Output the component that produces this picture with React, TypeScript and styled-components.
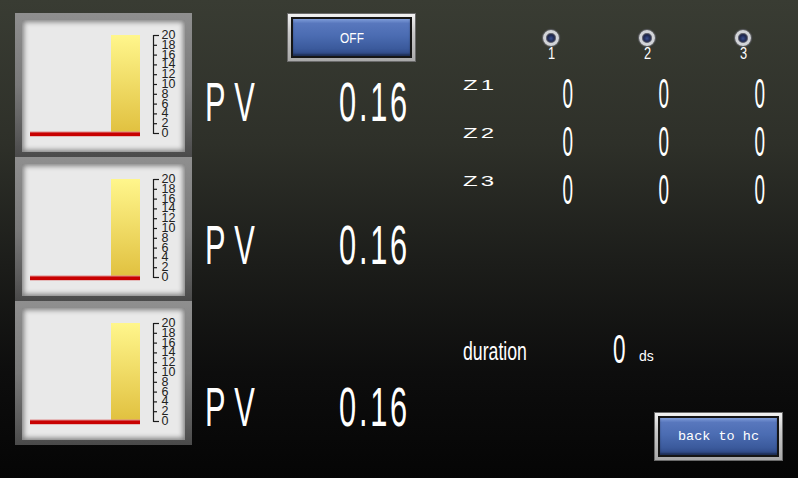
import React from 'react';
import styled, { createGlobalStyle } from 'styled-components';

const GlobalStyle = createGlobalStyle`
html, body { margin: 0; padding: 0; background: #000; }
#root { width: 798px; height: 478px; }
`

//region:Styled Components
const Screen = styled.div`
width: 798px;
height: 478px;
overflow: hidden;
display: flex;
background: linear-gradient(180deg, #393c33 0%, #2e3029 30%, #1c1d1a 55%, #0d0d0d 78%, #050505 100%);
font-family: "Liberation Sans", Arial, sans-serif;
color: #fff;`
const LeftPane = styled.div`
flex: 0 0 440px;
width: 440px;
min-width: 0;
padding: 13px 0 0 15px;
box-sizing: border-box;
display: flex;
flex-direction: column;`
const GaugeRow = styled.div`
display: flex;
height: 144px;
min-width: 0;`
const Frame = styled.div`
flex: 0 0 177px;
height: 144px;
box-sizing: border-box;
padding: 7px 7px 5px 7px;
display: flex;
background: linear-gradient(180deg, #8f8f8f 0%, #7a7a7a 50%, #5a5a5a 85%, #4a4a4a 100%);`
const Dial = styled.div`
flex: 1;
display: flex;
background: #e9e9e9;
box-shadow: inset 0 0 5px 2px rgba(0, 0, 0, 0.45);`
const Readout = styled.div`
flex: 1;
min-width: 0;
padding: 0 30px 0 13px;
display: flex;
flex-direction: column;`
const PvLine = styled.div<{ $top: number }>`
margin-top: ${p => p.$top}px;
display: flex;
justify-content: space-between;
align-items: flex-start;`
const Slot = styled.div<{ $w: number; $end?: boolean; $drop?: number }>`
flex: 0 0 ${p => p.$w}px;
width: ${p => p.$w}px;
display: flex;
justify-content: ${p => p.$end ? 'flex-end' : 'flex-start'};
margin-bottom: ${p => -(p.$drop ?? 0)}px;`
const Lcd = styled.span<{ $size: number; $sx: number; $origin?: string; $ls?: number }>`
display: inline-block;
flex-shrink: 0;
font-family: "Liberation Sans", Arial, sans-serif;
font-size: ${p => p.$size}px;
line-height: ${p => Math.round(p.$size * 0.716)}px;
letter-spacing: ${p => p.$ls ?? 0}px;
transform: scaleX(${p => p.$sx});
transform-origin: ${p => p.$origin ?? 'left'} center;
color: #fff;
white-space: nowrap;`
const ButtonShell = styled.div<{ $left?: number }>`
width: 129px;
height: 49px;
margin-left: ${p => p.$left ?? 0}px;
box-sizing: border-box;
padding: 3px;
border: 1px solid #6a6a6a;
background: linear-gradient(180deg, #f2f2f2 0%, #c8c8c8 40%, #a9a9a9 100%);
display: flex;
flex-shrink: 0;`
const ButtonFace = styled.div<{ $mono?: boolean }>`
flex: 1;
border: 2px solid #151515;
background: linear-gradient(180deg, #7d9bd8 0%, #5877bd 12%, #4b6cb2 45%, #3b5a9c 80%, #2c4580 100%);
box-shadow: inset 0 -2px 2px rgba(0, 0, 0, 0.35);
display: flex;
align-items: center;
justify-content: center;
color: #fff;
font-family: ${p => p.$mono ? '"Liberation Mono", "DejaVu Sans Mono", monospace' : '"Liberation Sans", Arial, sans-serif'};
font-size: ${p => p.$mono ? 13.5 : 14}px;`
const RightPane = styled.div`
flex: 0 0 358px;
width: 358px;
min-width: 0;
box-sizing: border-box;
padding: 30px 15px 0 23px;
display: flex;
flex-direction: column;`
const LampRow = styled.div`
display: grid;
grid-template-columns: 40px repeat(3, 96px);`
const LampCell = styled.div`
display: flex;
flex-direction: column;
align-items: center;
gap: 2px;`
const Lamp = styled.div`
width: 16px;
height: 16px;
border-radius: 50%;
box-sizing: border-box;
border: 3px solid #d2d4d8;
box-shadow: 0 0 1px 1px rgba(110, 110, 120, 0.8), inset 0 0 1px 1px #6a6a70;
background: radial-gradient(circle at 50% 55%, #3a4f8c 0%, #1d2750 45%, #0b0f22 100%);`
const ZoneGrid = styled.div`
margin-top: 20px;
display: grid;
grid-template-columns: 57px repeat(3, 96px);
grid-auto-rows: 30px;
row-gap: 18px;
align-items: start;`
const Cell = styled.div`
display: flex;
justify-content: center;`
const DurationRow = styled.div`
margin-top: 130px;
display: flex;
align-items: flex-end;`
const BackButton = styled(ButtonShell)`
align-self: flex-end;
margin-top: 51px;`
//endregion

const ticks = Array.from({ length: 11 }, (_, i) => i)

function GaugeChart() {
    const top = 15
    const step = 9.8
    return (
        <svg width="163" height="132" viewBox="0 0 163 132">
            <defs>
                <linearGradient id="barFill" x1="0" y1="0" x2="0" y2="1">
                    <stop offset="0" stopColor="#fff68c"/>
                    <stop offset="1" stopColor="#e1c140"/>
                </linearGradient>
            </defs>
            <rect x="89" y="15" width="29" height="97" fill="url(#barFill)"/>
            <rect x="8" y="111.5" width="110" height="5" fill="#e08a8a"/>
            <rect x="8" y="112.5" width="110" height="3.5" fill="#c80000"/>
            <line x1="131.5" y1={top} x2="131.5" y2={top + step * 10 + 1} stroke="#1a1a1a" strokeWidth="1.2"/>
            {ticks.map(i => (
                <line key={i} x1="131.5" x2={i === 0 || i === 10 ? 137 : 135}
                      y1={top + step * i + 0.5} y2={top + step * i + 0.5} stroke="#1a1a1a" strokeWidth="1.2"/>
            ))}
            {ticks.map(i => (
                <text key={i} x="139.5" y={top + step * i} dominantBaseline="central"
                      fontFamily='"Liberation Sans", Arial, sans-serif' fontSize="12.5" fill="#222">
                    {20 - i * 2}
                </text>
            ))}
        </svg>
    )
}

function Gauge({ pvTop, withButton }: { pvTop: number; withButton?: boolean }) {
    return (
        <GaugeRow>
            <Frame>
                <Dial><GaugeChart/></Dial>
            </Frame>
            <Readout>
                {withButton ? <ButtonShell $left={82}><ButtonFace>
                    <Lcd $size={14} $sx={0.85} $origin="center">OFF</Lcd>
                </ButtonFace></ButtonShell> : null}
                <PvLine $top={pvTop}>
                    <Slot $w={60}><Lcd $size={56} $sx={0.55} $ls={16}>PV</Lcd></Slot>
                    <Slot $w={90} $end><Lcd $size={56} $sx={0.55} $ls={5} $origin="right">0.16</Lcd></Slot>
                </PvLine>
            </Readout>
        </GaugeRow>
    )
}

export default function App() {
    const zones = ['Z1', 'Z2', 'Z3']
    return (
        <>
            <GlobalStyle/>
            <Screen>
                <LeftPane>
                    <Gauge pvTop={20} withButton/>
                    <Gauge pvTop={68}/>
                    <Gauge pvTop={86}/>
                </LeftPane>
                <RightPane>
                    <LampRow>
                        <span/>
                        {[1, 2, 3].map(n => (
                            <LampCell key={n}>
                                <Lamp/>
                                <Lcd $size={16} $sx={0.8} $origin="center">{n}</Lcd>
                            </LampCell>
                        ))}
                    </LampRow>
                    <ZoneGrid>
                        {zones.map(z => (
                            <React.Fragment key={z}>
                                <Lcd $size={15} $sx={1.6} $ls={2}>{z}</Lcd>
                                {[0, 1, 2].map(c => (
                                    <Cell key={c}>
                                        <Lcd $size={42} $sx={0.45} $origin="center">0</Lcd>
                                    </Cell>
                                ))}
                            </React.Fragment>
                        ))}
                    </ZoneGrid>
                    <DurationRow>
                        <Slot $w={150}><Lcd $size={26} $sx={0.68}>duration</Lcd></Slot>
                        <Slot $w={26} $drop={3}><Lcd $size={41} $sx={0.55}>0</Lcd></Slot>
                        <Slot $w={30}><Lcd $size={14} $sx={1}>ds</Lcd></Slot>
                    </DurationRow>
                    <BackButton>
                        <ButtonFace $mono>back to hc</ButtonFace>
                    </BackButton>
                </RightPane>
            </Screen>
        </>
    )
}
